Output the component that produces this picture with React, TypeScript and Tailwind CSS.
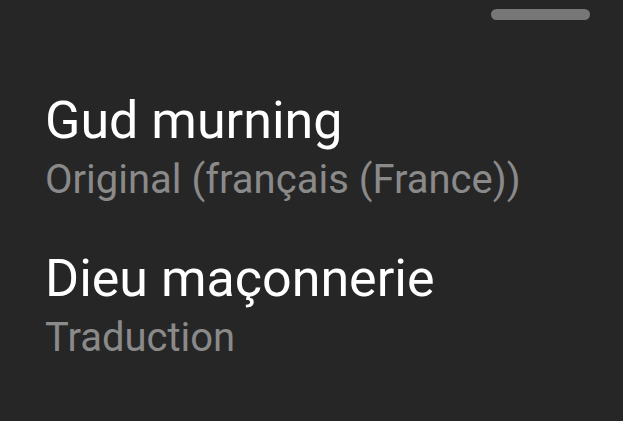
export default function App() {
  const rows = [
    { text: 'Gud murning', label: 'Original (français (France))' },
    { text: 'Dieu maçonnerie', label: 'Traduction' },
  ];

  return (
    <div className="h-[421px] w-[623px] overflow-hidden bg-[#262626] font-['Roboto',sans-serif]">
      <div className="flex justify-end pr-[33px] pt-[9px]">
        <div className="h-[11px] w-[99px] rounded-full bg-[#777777]" />
      </div>
      <div className="flex flex-col gap-[43px] px-[45px] pt-[71px]">
        {rows.map(r => (
          <div key={r.text} className="flex flex-col">
            <div className="text-[52px] leading-[60px] text-white">{r.text}</div>
            <div className="mt-[3px] text-[40px] leading-[52px] text-[#8a8a8a]">{r.label}</div>
          </div>
        ))}
      </div>
    </div>
  );
}
